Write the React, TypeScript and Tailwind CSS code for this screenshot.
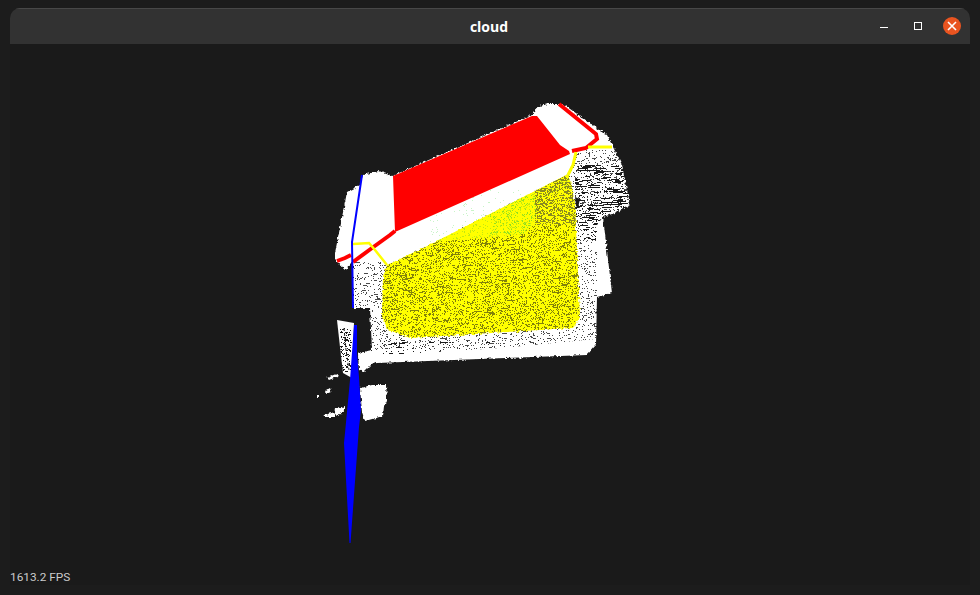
const RED = "#ff0000";
const YELLOW = "#ffff00";
const BLUE = "#0000ff";
const WHITE = "#ffffff";
const DARK = "#1a1a1a";

// Zone outlines in page coordinates, the svg below uses the same numbers
const wall =
  "353,262 388,262 568,172 575,150 606,146 612,146 622,165 625,180 630,205 618,212 603,217 597,225 597,297 596,339 500,348 372,356 360,354 372,350 370,308 353,308";
const bodyOutline =
  "347,192 360,185 363,175 378,171 392,176 532,115 537,107 547,104 563,104 607,135 612,145 622,165 625,180 630,205 618,212 603,217 612,293 597,297 596,345 587,355 377,363 360,367 358,353 372,350 370,308 353,308 353,260 346,270 335,260 335,253";
const yellowBody =
  "387,265 440,240 568,174 572,188 575,205 577,250 580,317 573,328 410,338 388,330 382,317 383,277";
const brightBand =
  "437,241 568,174 572,188 541,199 533,223 523,234 445,241";

// mulberry32, the picture has to come out the same on every run
function rng(seed: number) {
  let s = seed;
  return () => {
    s = (s + 0x6d2b79f5) | 0;
    let t = Math.imul(s ^ (s >>> 15), 1 | s);
    t = (t + Math.imul(t ^ (t >>> 7), 61 | t)) ^ t;
    return ((t ^ (t >>> 14)) >>> 0) / 4294967296;
  };
}

function speckle(seed: number, count: number, x: number, y: number, w: number, h: number, maxLen: number, dashes = 0.06) {
  const r = rng(seed);
  let d = "";
  for (let i = 0; i < count; i++) {
    const px = Math.floor(x + r() * w);
    const py = Math.floor(y + r() * h);
    const len = r() < 1 - dashes ? 1 : 1 + Math.floor(r() * maxLen);
    d += `M${px} ${py}h${len}v1h-${len}z`;
  }
  return d;
}

function CloudView() {
  return (
    <svg className="absolute left-0 top-0" width="980" height="595" viewBox="0 0 980 595">
      <defs>
        <clipPath id="wall">
          <polygon points={wall} />
        </clipPath>
        <clipPath id="yellow">
          <polygon points={yellowBody} />
        </clipPath>
        <clipPath id="bright">
          <polygon points={brightBand} />
        </clipPath>
        <clipPath id="band">
          <polygon points="393,232 570,150 568,174 387,265" />
        </clipPath>
        <clipPath id="stub">
          <polygon points="337,320 354,323 352,378 343,373 341,356" />
        </clipPath>
        <filter id="rough" x="-5%" y="-5%" width="110%" height="110%">
          <feTurbulence type="fractalNoise" baseFrequency="0.35" numOctaves="2" seed="4" />
          <feDisplacementMap in="SourceGraphic" scale="4" xChannelSelector="R" yChannelSelector="G" />
        </filter>
      </defs>

      <polygon points={bodyOutline} fill={WHITE} filter="url(#rough)" />

      {/* speckle of the rear wall, solid white strip stays along the bottom */}
      <g clipPath="url(#wall)" shapeRendering="crispEdges">
        <path d={speckle(11, 7000, 353, 150, 280, 200, 4)} fill="#4a4a4a" />
        <path d={speckle(12, 420, 575, 165, 55, 75, 10, 0.5)} fill={DARK} />
        <path d={speckle(13, 80, 376, 340, 220, 15, 6, 0.4)} fill={DARK} />
      </g>
      <polygon points="575,197 580,199 578,208 576,206" fill={DARK} />

      {/* floor plane */}
      <polygon points={yellowBody} fill={YELLOW} filter="url(#rough)" />
      <g clipPath="url(#yellow)" shapeRendering="crispEdges">
        <path d={speckle(21, 6200, 380, 225, 202, 114, 8, 0.025)} fill="#82820a" />
      </g>
      <polygon points={brightBand} fill={YELLOW} />
      <g clipPath="url(#bright)" shapeRendering="crispEdges">
        <path d={speckle(22, 1300, 437, 174, 135, 68, 1, 0)} fill="#c4e810" />
        <path d={speckle(24, 260, 490, 195, 50, 40, 1, 0)} fill="#90e020" />
      </g>
      <g clipPath="url(#yellow)" shapeRendering="crispEdges">
        <path d={speckle(23, 1000, 535, 175, 42, 50, 5, 0.08)} fill="#8a8a20" />
      </g>

      {/* white band under the red plane */}
      <polygon points="393,232 570,150 575,152 568,174 387,265 376,250" fill={WHITE} />
      <g clipPath="url(#band)" shapeRendering="crispEdges">
        <path d={speckle(31, 220, 430, 190, 130, 60, 1, 0)} fill="#c8f5c8" />
      </g>

      {/* red plane and its outline */}
      <polygon points="393,176 532,116 537,116 560,145 569,151 570,154 395,232" fill={RED} />
      <polyline points="395,231 390,235 372,248 353,262" fill="none" stroke={RED} strokeWidth="4" />
      <polyline points="337,261 345,258 351,255" fill="none" stroke={RED} strokeWidth="4" />
      <polyline points="559,104 596,134 597,139 586,148 572,151" fill="none" stroke={RED} strokeWidth="4" />

      {/* yellow outline */}
      <polyline points="353,244 369,243 375,250 387,265" fill="none" stroke={YELLOW} strokeWidth="2.5" />
      <polyline points="576,152 573,165 568,175" fill="none" stroke={YELLOW} strokeWidth="3" />
      <polyline points="588,147 612,147" fill="none" stroke={YELLOW} strokeWidth="3" />

      {/* blue plane */}
      <polyline points="362,175 352,242 353,308" fill="none" stroke={BLUE} strokeWidth="2" />

      {/* lower stub */}
      <polygon points="337,320 354,323 352,378 343,373 341,356" fill={WHITE} />
      <g clipPath="url(#stub)" shapeRendering="crispEdges">
        <path d={speckle(41, 110, 340, 328, 11, 44, 3, 0.2)} fill={DARK} />
      </g>
      <polyline points="344,328 346,350 349,370" fill="none" stroke={DARK} strokeWidth="1" strokeDasharray="3 2" />

      {/* loose blobs */}
      <g fill={WHITE} filter="url(#rough)">
        <polygon points="358,353 372,352 383,356 372,364 364,372 359,370" />
        <polygon points="360,388 372,385 386,385 387,400 384,406 383,416 365,421 362,412" />
        <polygon points="327,378 337,374 339,376 329,380" />
        <polygon points="325,391 330,388 331,391 326,393" />
        <rect x="317" y="395" width="2" height="2" />
        <polygon points="324,415 335,412 335,417 323,417" />
        <polygon points="335,409 345,406 345,411 338,415 334,414" />
      </g>

      <polygon
        points="354,325 357,325 357,353 359,377 361,410 359,427 350.5,543 349.5,543 344,443 345,433 350,380"
        fill={BLUE}
      />
    </svg>
  );
}

export default function App() {
  return (
    <div className="relative w-[980px] h-[595px] overflow-hidden bg-[#1c1c1c] pl-[10px] pr-[10px] pt-[8px] pb-[10px]">
      <div className="flex flex-col h-full rounded-t-[10px] overflow-hidden bg-[#1a1a1a]">
        <header className="relative flex items-center justify-center h-[36px] shrink-0 bg-[#323232] border-t border-[#484848] border-b-[#2a2a2a]">
          <span className="font-['Open_Sans',sans-serif] font-bold text-[14px] text-white -translate-x-[1px]">cloud</span>
          <div className="absolute right-[9px] top-[8px] flex items-center gap-[20px]">
            <svg width="10" height="18" viewBox="0 0 10 18" className="mr-[4px]">
              <rect x="1" y="10" width="8" height="1" fill="#ffffff" />
            </svg>
            <svg width="10" height="18" viewBox="0 0 10 18">
              <rect x="1.5" y="5.5" width="7" height="7" fill="none" stroke="#ffffff" />
            </svg>
            <div className="flex items-center justify-center w-[18px] h-[18px] rounded-full bg-[#e95420]">
              <svg width="10" height="10" viewBox="0 0 10 10">
                <path d="M1 1L9 9M9 1L1 9" stroke="#ffffff" strokeWidth="1.6" />
              </svg>
            </div>
          </div>
        </header>
      </div>
      <CloudView />
      <span className="absolute left-[10px] top-[570px] font-['Roboto',sans-serif] text-[11.8px] leading-[15px] text-[#cccccc]">
        1613.2 FPS
      </span>
    </div>
  );
}
